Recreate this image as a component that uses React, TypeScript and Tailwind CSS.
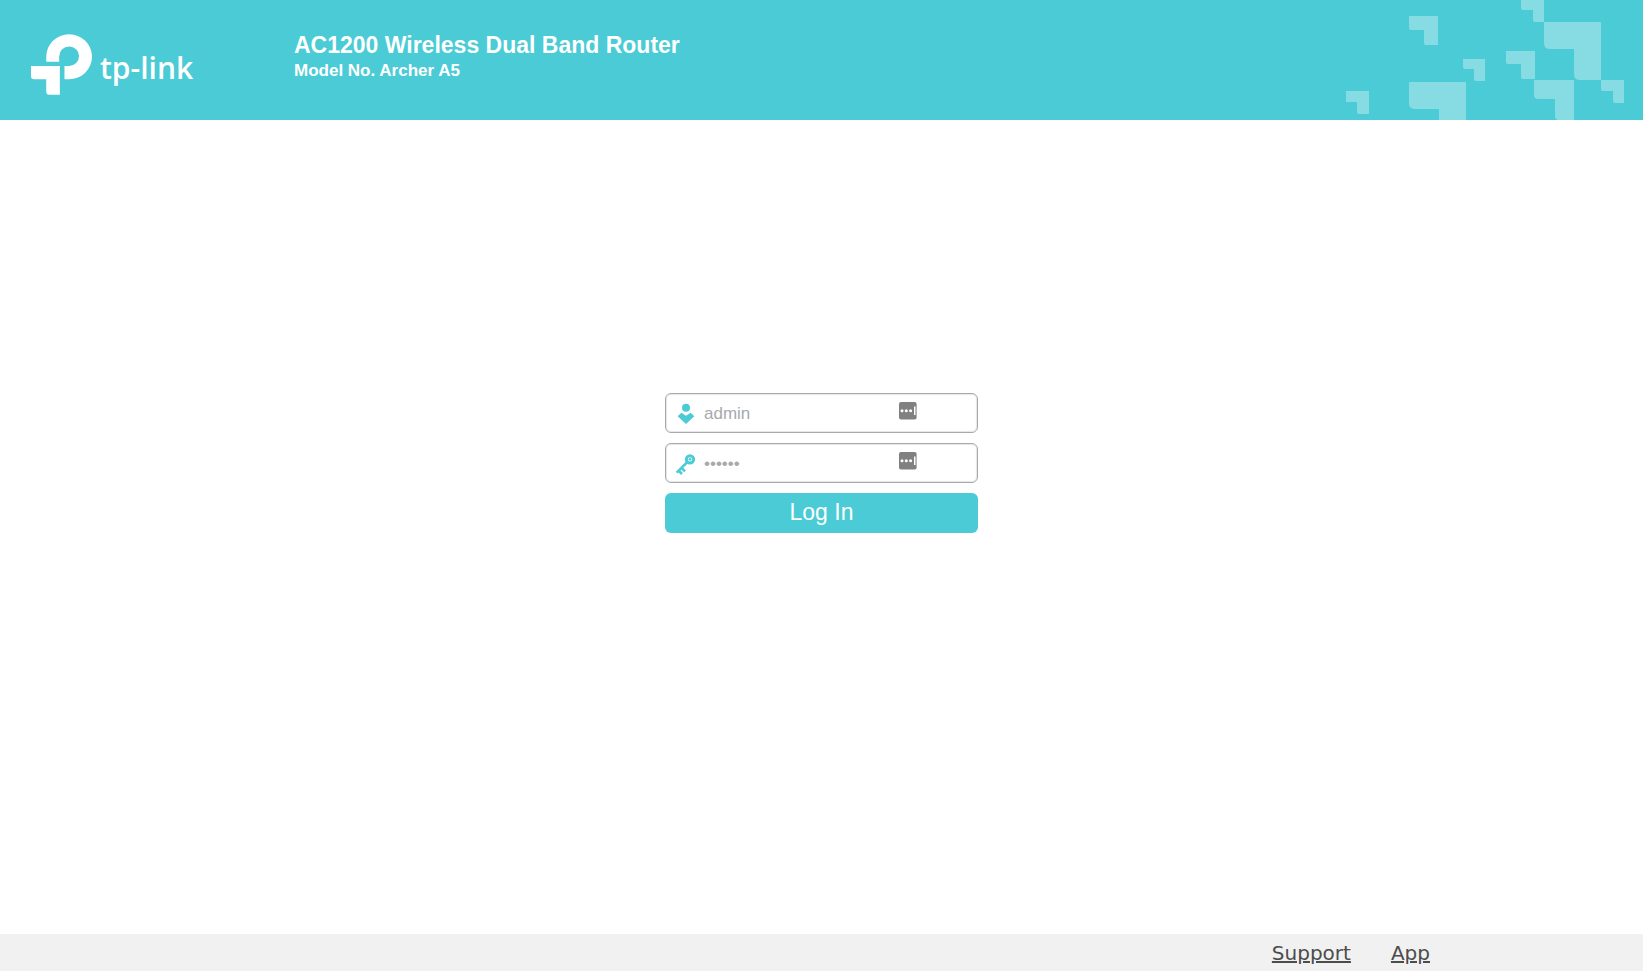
import { useState } from "react";
import type { FormEvent, ReactNode } from "react";

function Logo() {
  return (
    <a href="#home" aria-label="TP-Link home" className="flex items-start text-white">
      <svg viewBox="33 42 184 183" className="h-[61px] w-[61px] shrink-0" fill="currentColor" aria-hidden="true">
        <path d="M79 125V110A69 68 0 0 1 148 42A69 68 0 0 1 217 110A69 68 0 0 1 148 178H134V138H148A30 30 0 0 0 178 108A30 29 0 0 0 148 79A30 30 0 0 0 118 109V125Z" />
        <path d="M33 138H120V225H88Q79 225 79 216V178H42Q33 178 33 169Z" />
      </svg>
      <span className="ml-2 mt-3.5 font-['Open_Sans',sans-serif] text-[30px] font-semibold leading-10">tp-link</span>
    </a>
  );
}

function Pattern() {
  return (
    <svg viewBox="1346 0 278 120" className="h-[120px] w-[278px] shrink-0" fill="#86dce2" aria-hidden="true">
      <path d="M1409 16H1438V45H1426Q1424 45 1424 43V30H1411Q1409 30 1409 28Z" />
      <path d="M1463 59H1485V81H1476Q1474 81 1474 79V69H1465Q1463 69 1463 67Z" />
      <path d="M1346 91H1369V114H1359Q1357 114 1357 112V102H1346Z" />
      <path d="M1409 82H1466V120H1439V109H1414Q1409 108 1409 104Z" />
      <path d="M1521 0H1544V22H1535Q1533 22 1533 20V10H1523Q1521 10 1521 8Z" />
      <path d="M1544 22H1601V80H1580Q1574 80 1574 74V49H1550Q1544 49 1544 43Z" />
      <path d="M1506 51H1535V79H1523Q1521 79 1521 77V64H1508Q1506 64 1506 62Z" />
      <path d="M1534 80H1574V120H1558Q1555 119 1555 116V99H1538Q1534 99 1534 95Z" />
      <path d="M1601 80H1624V103H1615Q1613 103 1613 101V91H1603Q1601 91 1601 89Z" />
    </svg>
  );
}

function UserIcon() {
  return (
    <svg viewBox="63 54 60 66" className="h-[22px] w-5 shrink-0" fill="#4acbd6" aria-hidden="true">
      <circle cx="93" cy="68" r="12" />
      <path d="M68 94L79 83L93 92L107 83L118 94L93 117Z" />
    </svg>
  );
}

function KeyIcon() {
  return (
    <svg viewBox="63 203 60 66" className="h-[22px] w-5 shrink-0" fill="none" stroke="#4acbd6" aria-hidden="true">
      <circle cx="105" cy="222" r="11" strokeWidth="9" />
      <circle cx="105" cy="222" r="4" fill="#4acbd6" stroke="none" />
      <path d="M96 231L65 262M70 255L81 266M79 247L90 258" strokeWidth="8" />
    </svg>
  );
}

function FillButton({ label }: { label: string }) {
  return (
    <button type="button" aria-label={label} className="mr-[60px] mt-2 self-start">
      <svg viewBox="0 0 18 18" className="h-[18px] w-[18px]" aria-hidden="true">
        <rect width="17.6" height="17.6" rx="2" fill="#808080" />
        <g fill="#fff">
          <circle cx="3" cy="8.8" r="1.5" />
          <circle cx="7.3" cy="8.8" r="1.5" />
          <circle cx="11.6" cy="8.8" r="1.5" />
          <rect x="15" y="4.5" width="1.5" height="8.5" />
        </g>
      </svg>
    </button>
  );
}

type FieldProps = {
  id: string;
  label: string;
  type: string;
  value: string;
  onChange: (value: string) => void;
  icon: ReactNode;
};

function Field({ id, label, type, value, onChange, icon }: FieldProps) {
  return (
    <div className="flex h-10 items-center rounded-md border border-[#a7a9ac] bg-white pl-[10px] shadow-[inset_0_0_1px_1px_#e6e6e8]">
      <label htmlFor={id} aria-label={label} className="pt-0.5">
        {icon}
      </label>
      <input
        id={id}
        type={type}
        value={value}
        onChange={(e) => onChange(e.target.value)}
        className="h-9 min-w-0 flex-1 bg-transparent pl-2 pt-0.5 text-[17px] text-[#a7a9ac] outline-none"
      />
      <FillButton label={"Fill " + label} />
    </div>
  );
}

export default function App() {
  const [user, setUser] = useState("admin");
  const [password, setPassword] = useState("secret");
  const submit = (e: FormEvent) => e.preventDefault();

  return (
    <div className="flex min-h-screen flex-col bg-white font-['Liberation_Sans',Arial,sans-serif]">
      <header className="flex items-start bg-[#4acbd6] pl-[31px] pr-[19px] text-white">
        <div className="w-[263px] shrink-0 pt-[34px]">
          <Logo />
        </div>
        <div className="flex-1 pt-8 font-bold">
          <h1 className="text-[23px] leading-[26px]">AC1200 Wireless Dual Band Router</h1>
          <p className="text-[17px] leading-[26px]">Model No. Archer A5</p>
        </div>
        <Pattern />
      </header>

      <main className="flex flex-1 justify-center px-4 pt-[273px]">
        <form onSubmit={submit} className="flex w-full max-w-[313px] flex-col gap-[10px]">
          <Field id="user" label="User name" type="text" value={user} onChange={setUser} icon={<UserIcon />} />
          <Field id="password" label="Password" type="password" value={password} onChange={setPassword} icon={<KeyIcon />} />
          <button type="submit" className="h-10 rounded-md bg-[#4acbd6] pb-0.5 text-[23px] text-white">
            Log In
          </button>
        </form>
      </main>

      <footer className="flex h-[37px] items-center justify-end gap-10 bg-[#f1f1f1] pr-[213px] font-['DejaVu_Sans',Verdana,sans-serif] text-xl text-[#4c4c4c]">
        <a href="#support" className="underline">Support</a>
        <a href="#app" className="underline">App</a>
      </footer>
    </div>
  );
}
